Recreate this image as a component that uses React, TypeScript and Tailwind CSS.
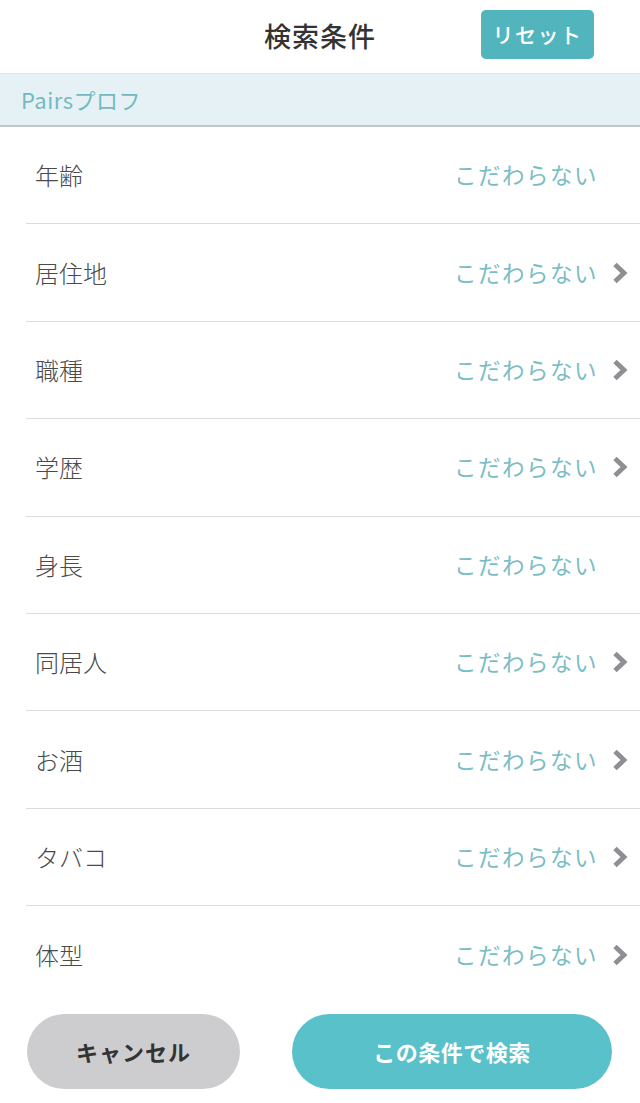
import React from 'react';

const items: { label: string; arrow: boolean }[] = [
  { label: '年齢', arrow: false },
  { label: '居住地', arrow: true },
  { label: '職種', arrow: true },
  { label: '学歴', arrow: true },
  { label: '身長', arrow: false },
  { label: '同居人', arrow: true },
  { label: 'お酒', arrow: true },
  { label: 'タバコ', arrow: true },
  { label: '体型', arrow: true },
];

const Chevron = () => (
  <svg width="16" height="22" viewBox="0 0 16 22" className="shrink-0">
    <polyline points="3,2.5 12,11 3,19.5" fill="none" stroke="#8e8e93" strokeWidth="4.8" />
  </svg>
);

export default function App() {
  return (
    <div
      className="w-[640px] h-[1103px] bg-white flex flex-col overflow-hidden"
      style={{ fontFamily: '"Noto Sans CJK JP", "Noto Sans", sans-serif' }}
    >
      {/* header */}
      <div className="h-[73px] shrink-0 relative flex items-center justify-center">
        <span className="text-[27px] font-medium text-[#333] tracking-[1px]">検索条件</span>
        <button className="absolute left-[481px] top-[10px] w-[113px] h-[49px] rounded-[5px] bg-[#52b5bd] text-white text-[21px] font-medium tracking-[1.5px]">
          リセット
        </button>
      </div>

      {/* section header */}
      <div className="h-[54px] shrink-0 bg-[#e5f1f4] border-t border-[#d9e6ea] border-b-2 border-b-[#c3c6c8] flex items-center pl-[21px]">
        <span className="text-[22px] text-[#74b9c0] tracking-[0.5px]">Pairsプロフ</span>
      </div>

      {/* rows */}
      <div className="flex flex-col">
        {items.map((it, i) => (
          <div
            key={it.label}
            className={
              'h-[97.4px] ml-[26px] flex items-center ' +
              (i < items.length - 1 ? 'border-b border-[#dcdcdc]' : '')
            }
          >
            <span className="pl-[9px] text-[24px] text-[#4a4a4a] font-light">{it.label}</span>
            <div className="ml-auto flex items-center">
              <span className="text-[22.5px] text-[#7bbdc4] tracking-[1.5px]">こだわらない</span>
              <div className="w-[42px] flex justify-end pr-[12px]">{it.arrow && <Chevron />}</div>
            </div>
          </div>
        ))}
      </div>

      {/* buttons */}
      <div className="flex items-center pl-[27px] pr-[28px] mt-[10px] gap-[52px]">
        <button className="w-[213px] h-[75px] rounded-full bg-[#cdcdd0] text-[#333] text-[22px] font-bold tracking-[1px]">
          キャンセル
        </button>
        <button className="flex-1 h-[75px] rounded-full bg-[#59c1ca] text-white text-[22px] font-bold tracking-[0.5px]">
          この条件で検索
        </button>
      </div>
    </div>
  );
}
